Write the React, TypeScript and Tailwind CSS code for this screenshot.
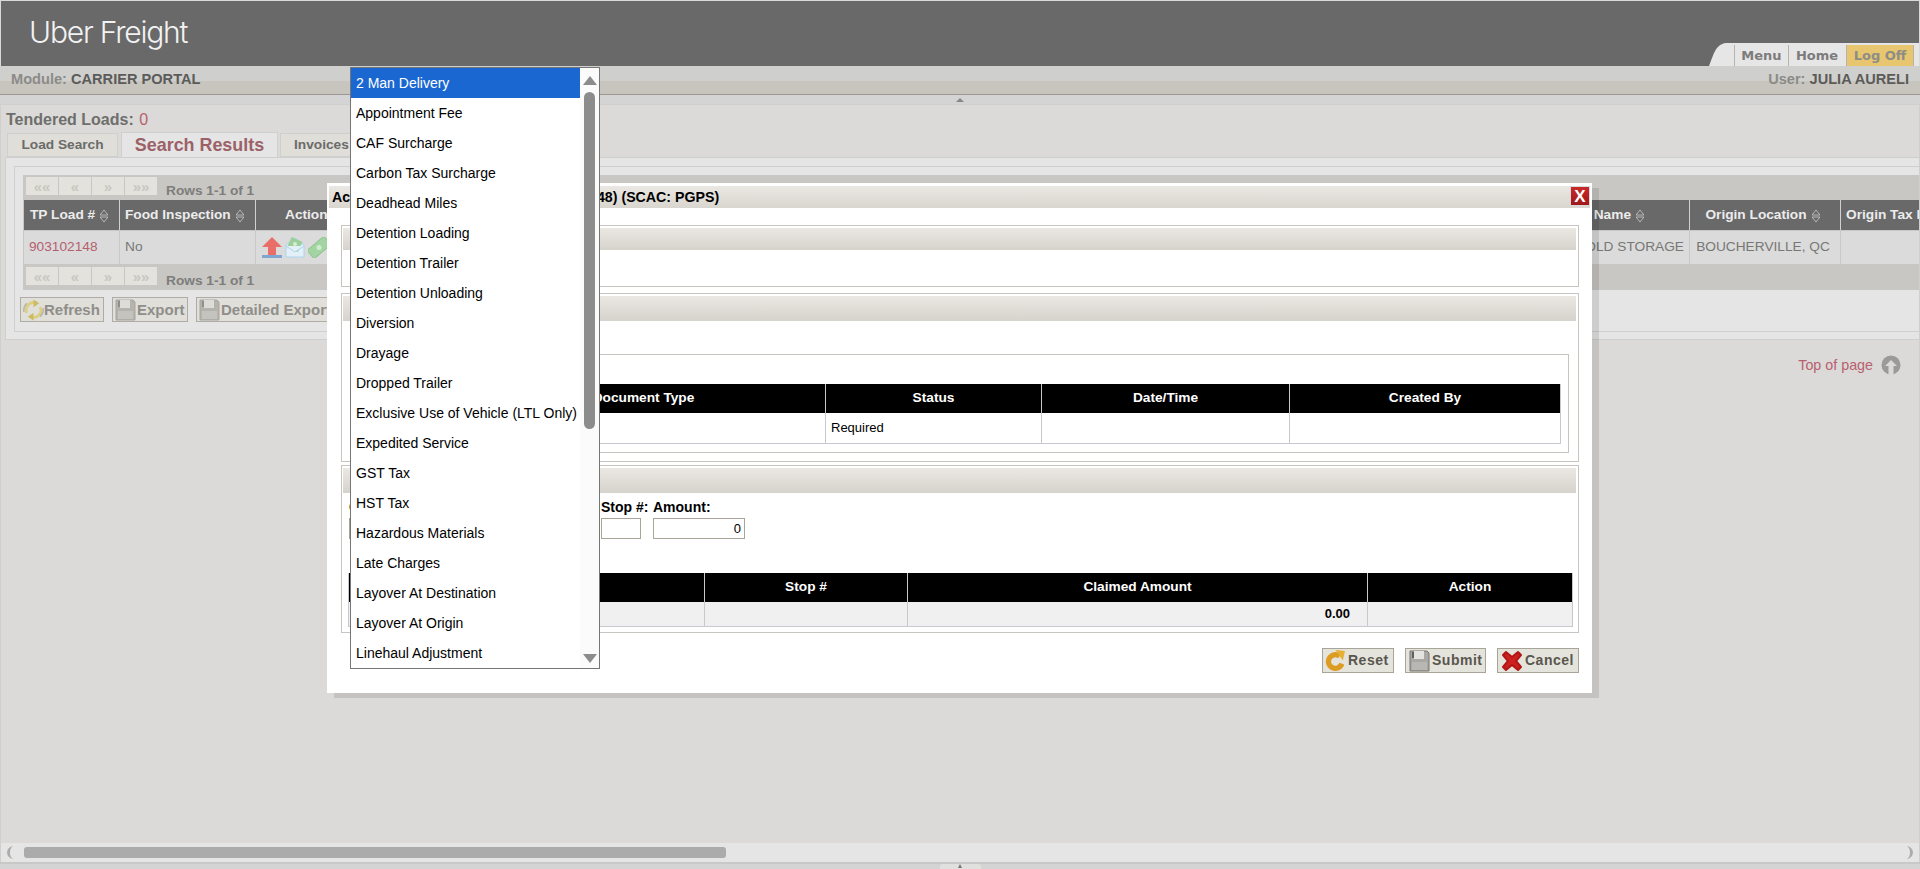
import React from "react";

const sans = "[font-family:'Liberation_Sans',Arial,sans-serif]";

function SortIcon({ c = "#b9b9b9" }: { c?: string }) {
  return (
    <svg width="10" height="14" viewBox="0 0 10 14" className="shrink-0 ml-[4px] mt-[2px]">
      <path d="M5 1 L9 6 H1 Z" fill="none" stroke={c} strokeWidth="1" />
      <path d="M1 8 H9 L5 13 Z" fill="none" stroke={c} strokeWidth="1" />
    </svg>
  );
}

function Pager({ top }: { top?: boolean }) {
  return (
    <div className={`flex items-start h-[26px] pl-[2px] ${top ? "pt-[2px]" : "pt-[3px]"}`}>
      {["««", "«", "»", "»»"].map((g) => (
        <div key={g} className="w-[32px] h-[18px] mr-px bg-[#e4e2dd] flex items-center justify-center text-[15px] leading-none font-bold text-[#c9c7c0]">
          {g}
        </div>
      ))}
      <div className="ml-[8px] mt-[6px] text-[13.7px] leading-[16px] font-bold text-[#7d7d7b]">Rows 1-1 of 1</div>
    </div>
  );
}

function SaveIcon({ faded }: { faded?: boolean }) {
  return (
    <svg width="21" height="22" viewBox="0 0 21 22" className="shrink-0">
      <path d="M1 1 H18 L20 3 V21 H1 Z" fill={faded ? "#b5b3ae" : "#a9a8a4"} stroke={faded ? "#a8a6a1" : "#77766f"} />
      <rect x="5" y="1" width="10" height="8" fill={faded ? "#dedcd7" : "#e4e3df"} />
      <rect x="3" y="2" width="2" height="6" fill={faded ? "#8f8e8a" : "#5e5e5a"} />
      <rect x="3" y="12" width="15" height="8" fill={faded ? "#c4c3be" : "#b8b7b3"} />
    </svg>
  );
}

function FieldHeader() {
  return <div className="h-[25px] bg-[linear-gradient(#ebe8e3,#d6d3cd)]" />;
}

const options = [
  "2 Man Delivery", "Appointment Fee", "CAF Surcharge", "Carbon Tax Surcharge", "Deadhead Miles",
  "Detention Loading", "Detention Trailer", "Detention Unloading", "Diversion", "Drayage",
  "Dropped Trailer", "Exclusive Use of Vehicle (LTL Only)", "Expedited Service", "GST Tax", "HST Tax",
  "Hazardous Materials", "Late Charges", "Layover At Destination", "Layover At Origin", "Linehaul Adjustment",
];

export default function App() {
  return (
    <div className={`relative w-[1920px] h-[869px] overflow-hidden bg-[#dbdad8] ${sans}`}>
      {/* Header */}
      <header className="relative h-[66px] bg-[#696969] border-t border-l border-r border-[#d9d9d9] flex justify-between">
        <div className="ml-[28px] mt-[14px] text-[30px] leading-[34px] font-light text-[#f2f2f2] tracking-[-1.2px] [font-family:Inter,sans-serif]">
          Uber Freight
        </div>
        <div className="self-end flex items-end h-[23px]">
          <svg width="25" height="23" viewBox="0 0 25 23" className="block">
            <path d="M0 23 C4 14 6 1 17 0 H25 V23 Z" fill="#e6e6e6" />
          </svg>
          <nav className="h-[23px] bg-[#e6e6e6] flex items-stretch pt-[2px] pr-[5px] [font-family:'DejaVu_Sans',sans-serif] text-[13px] font-bold text-[#7c7c7c]">
            <div className="w-[54px] border-l border-[#b5b3ab] flex items-center justify-center">Menu</div>
            <div className="w-[57px] border-l border-[#b5b3ab] flex items-center justify-center">Home</div>
            <div className="w-[68px] ml-px border-l border-[#b5b3ab] bg-[#e8c670] border-r flex items-center justify-center text-[#8d8d86]">Log Off</div>
          </nav>
        </div>
      </header>

      {/* Module bar */}
      <div className="h-[29px] bg-[linear-gradient(#cfcfcd_55%,#c8c5be_55%)] border-b border-[#9c9890] flex items-center justify-between pl-[11px] pr-[11px] text-[14.6px] font-bold">
        <div className="text-[#8b8b88]">Module: <span className="text-[#5b5b59]">CARRIER PORTAL</span></div>
        <div className="text-[#8b8b88]">User: <span className="text-[#5b5b59]">JULIA AURELI</span></div>
      </div>

      {/* Splitter */}
      <div className="h-[9px] bg-[#d4d4d4] flex justify-center items-end">
        <div className="w-0 h-0 mb-[2px] border-x-[4px] border-x-transparent border-b-[4px] border-b-[#888888]" />
      </div>

      {/* Main panel */}
      <main className="h-[758px] border border-[#cfcfcd] border-b-0 bg-[#dbdad8] flex flex-col">
        <div className="h-[27px] pl-[5px] pt-[5px] text-[16px] leading-[20px] font-bold text-[#6e6e6c]">
          Tendered Loads: <span className="font-normal text-[#b8606f] ml-[1px]">0</span>
        </div>

        {/* Tabs */}
        <div className="h-[26px] pl-[6px] flex items-end">
          <div className="w-[111px] h-[24px] mb-px bg-[#dfded9] border border-[#cfcfcd] flex items-center justify-center text-[13.7px] font-bold text-[#6b6b69]">Load Search</div>
          <div className="w-[157px] h-[26px] ml-[3px] bg-[#e5e5e5] border border-b-0 border-[#cfcfcd] flex items-center justify-center text-[17.9px] font-bold text-[#9c6168]">Search Results</div>
          <div className="w-[110px] h-[24px] ml-[2px] mb-px bg-[#dfded9] border border-[#cfcfcd] flex items-center pl-[13px] text-[13.7px] font-bold text-[#6b6b69]">Invoices</div>
        </div>

        {/* Tab panel */}
        <section className="ml-[4px] h-[183px] -mt-px bg-[#e5e5e5] border border-[#cfcfcd] border-r-0 pl-[8px] pt-[8px]">
          <div className="h-[166px] border border-[#cfcfcd] border-r-0 pl-[8px] pt-[8px]">
            <div className="h-[115px] bg-[#c8c7c3] pl-px overflow-hidden">
              <Pager top />
              <div className="grid grid-cols-[96px_136px_108px_1326px_151px_100px] h-[30px] bg-[#696969] text-[13.7px] font-bold text-[#ececec] -mt-px">
                <div className="flex items-center pl-[6px] border-r border-[#d0d0d0]">TP Load #<SortIcon /></div>
                <div className="flex items-center pl-[5px] border-r border-[#d0d0d0]">Food Inspection<SortIcon /></div>
                <div className="flex items-center pl-[29px] border-r border-[#d0d0d0]">Actions</div>
                <div className="flex items-center justify-end pr-[44px] border-r border-[#d0d0d0]">Carrier Name<SortIcon /></div>
                <div className="flex items-center justify-center pr-[4px] border-r border-[#d0d0d0]">Origin Location<SortIcon /></div>
                <div className="flex items-center pl-[5px] whitespace-nowrap">Origin Tax ID</div>
              </div>
              <div className="grid grid-cols-[96px_136px_108px_1326px_151px_100px] h-[34px] bg-[#dbdbdb] text-[13.7px] text-[#777775] border-t border-[#c8c8c8]">
                <div className="flex items-center pl-[5px] border-r border-[#c8c8c8] text-[#b5606f]">903102148</div>
                <div className="flex items-center pl-[5px] border-r border-[#c8c8c8]">No</div>
                <div className="flex items-center pl-[6px] gap-[3px] border-r border-[#c8c8c8]">
                  <svg width="20" height="21" viewBox="0 0 20 21"><path d="M10 0 L20 10 H14 V18 H6 V10 H0 Z" fill="#e96e68" /><rect x="0" y="18" width="20" height="3" fill="#7fa6d0" /></svg>
                  <svg width="20" height="21" viewBox="0 0 20 21"><path d="M1 8 L10 1 L19 8 V20 H1 Z" fill="#e4f0f7" stroke="#a9d5ee" /><rect x="4" y="2" width="12" height="11" fill="#9ccf9c" transform="rotate(25 10 7)" /><circle cx="10" cy="7" r="2" fill="#d5eed5" /><path d="M1 9 L10 15 L19 9" fill="#e4f0f7" stroke="#a9d5ee" /></svg>
                  <svg width="22" height="21" viewBox="0 0 22 21"><rect x="0" y="5" width="22" height="11" fill="#a3d4a3" stroke="#8fc58f" transform="rotate(-40 11 10.5)" /><circle cx="11" cy="10.5" r="2.5" fill="#cfeccf" /></svg>
                </div>
                <div className="flex items-center justify-end pr-[5px] border-r border-[#c8c8c8]">GOLD STORAGE</div>
                <div className="flex items-center justify-center pr-[4px] border-r border-[#c8c8c8]">BOUCHERVILLE, QC</div>
                <div />
              </div>
              <Pager />
            </div>
            <div className="flex gap-[8px] pt-[7px] -ml-[3px] text-[15px] font-bold text-[#8f8e89]">
              <div className="w-[84px] h-[25px] bg-[#e0dfd9] border border-[#aeaca4] flex items-center pt-px pl-[2px]">
                <svg width="21" height="22" viewBox="0 0 22 22" className="shrink-0" fill="none"><path d="M4 14 A7.5 7.5 0 0 1 14 4" stroke="#dccf84" strokeWidth="3" /><path d="M18 8 A7.5 7.5 0 0 1 8 18" stroke="#dccf84" strokeWidth="3" /><path d="M11 0 L17 4 L11 8 Z" fill="#cdbb62" /><path d="M11 22 L5 18 L11 14 Z" fill="#cdbb62" /><path d="M1 13 A10 10 0 0 1 4 4" stroke="#b5b4ae" strokeWidth="1.5" /><path d="M21 9 A10 10 0 0 1 18 18" stroke="#b5b4ae" strokeWidth="1.5" /></svg>
                Refresh
              </div>
              <div className="w-[76px] h-[25px] bg-[#e0dfd9] border border-[#aeaca4] flex items-center pt-px pl-[2px] gap-[1px]"><SaveIcon faded />Export</div>
              <div className="w-[160px] h-[25px] bg-[#e0dfd9] border border-[#aeaca4] flex items-center pt-px pl-[2px] gap-[1px]"><SaveIcon faded />Detailed Export</div>
            </div>
          </div>
        </section>

        {/* Top of page */}
        <div className="flex justify-end items-center pt-[15px] pr-[18px] text-[14.3px] leading-[20px] text-[#b8606f]">
          Top of page
          <svg width="20" height="20" viewBox="0 0 20 20" className="ml-[8px]"><circle cx="10" cy="10" r="9.5" fill="#9a9a98" /><path d="M10 5 L16 11 H12.5 V20 H7.5 V11 H4 Z" fill="#dbdad8" /></svg>
        </div>
        <div className="flex-1" />

        {/* Horizontal scrollbar */}
        <div className="h-[19px] bg-[#e5e5e5] relative flex items-center">
          <div className="absolute left-[6px] top-[3px] w-[8px] h-[13px] rounded-l-full border-l-[3px] border-[#ababab]" />
          <div className="ml-[23px] w-[702px] h-[11px] rounded-[3px] bg-[#ababab]" />
          <div className="absolute right-[6px] top-[3px] w-[8px] h-[13px] rounded-r-full border-r-[3px] border-[#ababab]" />
        </div>
      </main>

      {/* Bottom splitter */}
      <div className="h-[7px] bg-[#d4d4d4] border-t-2 border-[#c8c8c6] flex justify-center">
        <div className="w-[41px] h-[5px] bg-[#e0e0de] rounded-t-[3px] flex justify-center items-end">
          <div className="w-0 h-0 mb-px border-x-[2px] border-x-transparent border-b-[4px] border-b-[#777777]" />
        </div>
      </div>

      {/* Modal */}
      <div className="absolute left-[327px] top-[183px] w-[1265px] h-[510px] bg-white shadow-[7px_5px_0_rgba(0,0,0,0.1)] text-black">
        <div className="relative mx-[2px] mt-[3px] h-[22px] bg-[linear-gradient(#ebe8e3,#d9d6d0)] pl-[3px] text-[14.2px] font-bold leading-[22px] whitespace-nowrap">
          Accessorial Charges for Load (903102148) (SCAC: PGPS)
          <div className="absolute right-0 top-0 w-[20px] h-[20px] bg-[linear-gradient(#c92a2a,#a01818)] flex items-center justify-center text-white text-[17px] font-bold leading-none border border-[#d8d8d8]">X</div>
        </div>

        <div className="ml-[14px] mr-[13px] mt-[17px] h-[62px] border border-[#c8c5c0] pt-[2px] pl-px pr-[2px]">
          <div className="h-[22px] bg-[linear-gradient(#ebe8e3,#d6d3cd)]" />
        </div>

        <div className="ml-[14px] mr-[13px] mt-[6px] h-[169px] border border-[#c8c5c0] pt-[2px] pl-px pr-[2px]">
          <FieldHeader />
          <div className="ml-[7px] mr-[7px] mt-[33px] h-[99px] border border-[#c8c5c0] pt-[29px] pl-[8px] pr-[7px]">
            <div className="border border-[#c8c8d0] border-t-0">
              <div className="grid grid-cols-[102px_364px_216px_248px_1fr] h-[29px] bg-black text-white text-[13.7px] font-bold">
                <div className="border-r border-[#c8c8d0]" />
                <div className="flex items-center justify-center border-r border-[#c8c8d0]">Document Type</div>
                <div className="flex items-center justify-center border-r border-[#c8c8d0]">Status</div>
                <div className="flex items-center justify-center border-r border-[#c8c8d0]">Date/Time</div>
                <div className="flex items-center justify-center">Created By</div>
              </div>
              <div className="grid grid-cols-[102px_364px_216px_248px_1fr] h-[30px] text-[13px] text-black">
                <div className="border-r border-[#c8c8d0]" />
                <div className="border-r border-[#c8c8d0]" />
                <div className="flex items-center pl-[5px] border-r border-[#c8c8d0]">Required</div>
                <div className="border-r border-[#c8c8d0]" />
                <div />
              </div>
            </div>
          </div>
        </div>

        <div className="ml-[14px] mr-[13px] mt-[3px] h-[168px] border border-[#c8c5c0] pt-[2px] pl-px pr-[2px]">
          <FieldHeader />
          <div className="grid grid-cols-[241px_41px_92px] gap-x-[11px] pl-[6px] pt-[5px] text-[14px] font-bold">
            <div className="h-[18px] leading-[18px]">Charge Type:</div>
            <div className="h-[18px] leading-[18px] whitespace-nowrap">Stop #:</div>
            <div className="h-[18px] leading-[18px]">Amount:</div>
            <div className="mt-[2px] h-[21px] border border-[#a8a498]" />
            <div className="mt-[2px] h-[21px] w-[40px] border border-[#a8a498]" />
            <div className="mt-[2px] h-[21px] border border-[#a8a498] flex items-center justify-end pr-[3px] font-normal text-[13px]">0</div>
          </div>
          <div className="ml-[5px] mr-[3px] mt-[34px] border border-[#c8c8d0] border-t-0">
            <div className="grid grid-cols-[356px_203px_460px_1fr] h-[29px] bg-black text-white text-[13.7px] font-bold">
              <div className="flex items-center justify-center border-r border-[#c8c8d0]">Charge Type</div>
              <div className="flex items-center justify-center border-r border-[#c8c8d0]">Stop #</div>
              <div className="flex items-center justify-center border-r border-[#c8c8d0]">Claimed Amount</div>
              <div className="flex items-center justify-center">Action</div>
            </div>
            <div className="grid grid-cols-[356px_203px_460px_1fr] h-[24px] bg-[#f0f0f0] text-[13px] font-bold">
              <div className="border-r border-[#c8c8d0]" />
              <div className="border-r border-[#c8c8d0]" />
              <div className="flex items-center justify-end pr-[17px] border-r border-[#c8c8d0]">0.00</div>
              <div />
            </div>
          </div>
        </div>

        <div className="mt-[15px] mr-[13px] flex justify-end gap-[11px] text-[14px] font-bold text-[#59564f] tracking-[0.5px]">
          <div className="w-[72px] h-[25px] bg-[#e5e4dc] border border-[#a8a498] flex items-center pl-[2px] gap-[2px]">
            <svg width="21" height="21" viewBox="0 0 20 20" className="shrink-0" fill="none"><path d="M14 6 A6.5 6.5 0 1 0 16 13" stroke="#dc9c22" strokeWidth="5" /><path d="M10 0 L19 1 L17 10 Z" fill="#e8b030" /></svg>
            Reset
          </div>
          <div className="w-[81px] h-[25px] bg-[#e5e4dc] border border-[#a8a498] flex items-center pl-[3px] gap-[2px]"><SaveIcon />Submit</div>
          <div className="w-[82px] h-[25px] bg-[#e5e4dc] border border-[#a8a498] flex items-center pl-[3px] gap-[2px]">
            <svg width="22" height="22" viewBox="0 0 22 22" className="shrink-0"><path d="M2 5 L5 2 L11 7 L17 2 L20 5 L15 11 L20 17 L17 20 L11 15 L5 20 L2 17 L7 11 Z" fill="#cf1f1f" stroke="#b01818" strokeWidth="2" strokeLinejoin="round" /></svg>
            Cancel
          </div>
        </div>
      </div>

      {/* Open dropdown list */}
      <div className="absolute z-20 left-[350px] top-[67px] w-[250px] h-[602px] bg-white border border-[#767676] flex text-[14px] text-black">
        <div className="w-[229px]">
          {options.map((o, i) => (
            <div key={o} className={`h-[30px] pl-[5px] flex items-center whitespace-nowrap ${i === 0 ? "bg-[#1a67d2] text-white" : ""}`}>{o}</div>
          ))}
        </div>
        <div className="flex-1 bg-[#fbfbfb] relative flex flex-col items-center pt-[8px]">
          <div className="w-0 h-0 border-x-[7px] border-x-transparent border-b-[9px] border-b-[#8c8c8c]" />
          <div className="mt-[7px] w-[11px] h-[337px] rounded-full bg-[#8c8c8c]" />
          <div className="absolute bottom-[5px] w-0 h-0 border-x-[7px] border-x-transparent border-t-[9px] border-t-[#8c8c8c]" />
        </div>
      </div>
    </div>
  );
}
